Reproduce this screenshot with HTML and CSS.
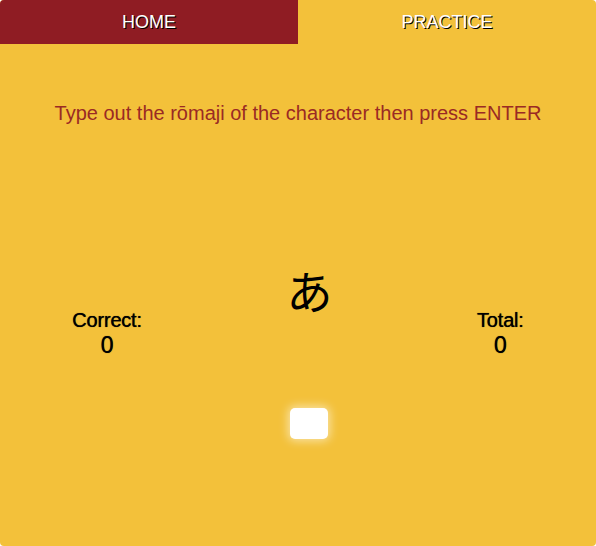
FILE: index.html
```html
<!DOCTYPE html>
<html lang="en">
<head>
<meta charset="utf-8">
<title>Kana Practice</title>
<link rel="stylesheet" href="styles.css">
</head>
<body>
<div class="app">
  <nav class="tabs">
    <div class="tab tab-active">HOME</div>
    <div class="tab">PRACTICE</div>
  </nav>
  <p class="instruction">Type out the rōmaji of the character then press ENTER</p>
  <div class="board">
    <div class="stat">
      <div class="stat-label">Correct:</div>
      <div class="stat-value">0</div>
    </div>
    <div class="center">
      <div class="kana">あ</div>
      <input class="answer" type="text" aria-label="answer">
    </div>
    <div class="stat">
      <div class="stat-label">Total:</div>
      <div class="stat-value">0</div>
    </div>
  </div>
</div>
</body>
</html>
```
FILE: styles.css
```css
html, body {
  margin: 0;
  padding: 0;
  background: #ffffff;
}
.app {
  width: 596px;
  height: 546px;
  background: #f3c13a;
  border-radius: 4px;
  overflow: hidden;
  font-family: "Liberation Sans", Arial, sans-serif;
}
.tabs {
  display: flex;
  height: 44px;
}
.tab {
  flex: 1;
  display: flex;
  align-items: center;
  justify-content: center;
  color: #ffffff;
  font-size: 18px;
  text-shadow: 1px 1px 0 #000000;
}
.tab-active {
  background: #8f1c23;
}
.instruction {
  margin: 58px 0 0;
  text-align: center;
  font-size: 20px;
  line-height: 23px;
  color: #9a2a24;
}
.board {
  display: flex;
  justify-content: space-around;
  align-items: flex-start;
  margin-top: 139px;
}
.stat {
  display: flex;
  flex-direction: column;
  align-items: center;
  margin-top: 45px;
  color: #000000;
}
.stat-label {
  font-size: 20px;
  line-height: 23px;
  letter-spacing: -0.2px;
  text-shadow: 0 0 0.7px #000;
}
.stat-value {
  font-size: 23px;
  line-height: 26px;
  text-shadow: 0 0 0.7px #000;
}
.center {
  display: flex;
  flex-direction: column;
  align-items: center;
}
.kana {
  font-family: "Noto Sans CJK JP", sans-serif;
  font-size: 46px;
  line-height: 50px;
  color: #000000;
}
.answer {
  margin-top: 94px;
  width: 38px;
  height: 31px;
  box-sizing: border-box;
  border: none;
  border-radius: 5px;
  background: #ffffff;
  box-shadow: 0 0 10px 2px rgba(255, 255, 255, 0.55);
  outline: none;
  padding: 0;
}
```
